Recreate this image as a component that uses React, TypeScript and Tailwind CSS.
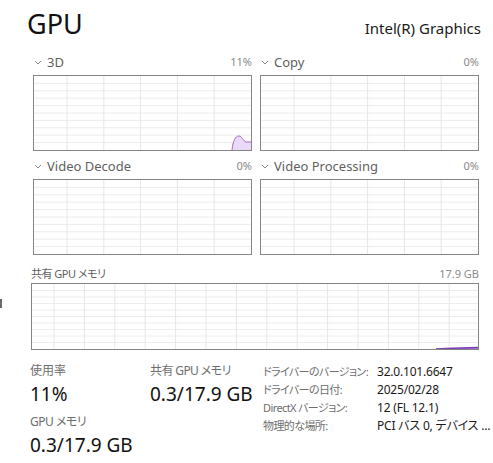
import React from 'react';

const font = { fontFamily: '"Noto Sans", "Noto Sans CJK JP", sans-serif' };

interface GridProps {
  w: number;
  h: number;
  x0: number;
  dx: number;
  cols: number;
  children?: React.ReactNode;
}

// Chart backdrop: light grid drawn in chart-local pixels
function Grid({ w, h, x0, dx, cols, children }: GridProps) {
  const rows = Array.from({ length: 9 }, (_, i) => ((i + 1) * h) / 10);
  const vlines = Array.from({ length: cols }, (_, i) => x0 + i * dx);
  return (
    <svg
      className="block h-full w-full"
      viewBox={`0 0 ${w} ${h}`}
      preserveAspectRatio="none"
    >
      {rows.map((y) => (
        <line key={`h${y}`} x1={0} x2={w} y1={y} y2={y} stroke="#ececec" strokeWidth={1} />
      ))}
      {vlines.map((x) => (
        <line key={`v${x}`} x1={x} x2={x} y1={0} y2={h} stroke="#e6e6e6" strokeWidth={1} />
      ))}
      {children}
    </svg>
  );
}

function Chevron() {
  return (
    <svg width="8" height="5" viewBox="0 0 8 5" className="mr-[5px] ml-[1px] shrink-0">
      <polyline points="1,1 4,4 7,1" fill="none" stroke="#8a8a8a" strokeWidth="1" />
    </svg>
  );
}

function SmallChart({
  title,
  value,
  children,
}: {
  title: string;
  value: string;
  children?: React.ReactNode;
}) {
  return (
    <div className="flex flex-col">
      <div className="flex h-[25px] items-center justify-between">
        <div className="flex items-center">
          <Chevron />
          <span className="text-[13px] text-[#5f5f5f]">{title}</span>
        </div>
        <span className="text-[11px] text-[#8a8a8a]">{value}</span>
      </div>
      <div className="h-[76px] border border-[#858585] bg-white">
        <Grid w={217} h={74} x0={33} dx={36.8} cols={5}>
          {children}
        </Grid>
      </div>
    </div>
  );
}

function Detail({ label, value }: { label: string; value: string }) {
  return (
    <div className="flex h-[18px] items-center whitespace-nowrap">
      <span className="w-[114px] shrink-0 text-[11px] tracking-[-0.6px] text-[#6e6e6e]">{label}</span>
      <span className="text-[12px] tracking-[-0.2px] text-[#1a1a1a]">{value}</span>
    </div>
  );
}

export default function App() {
  return (
    <div
      className="relative h-[463px] w-[493px] overflow-hidden bg-white [font-feature-settings:'palt']"
      style={font}
    >
      {/* Cut-off edge of the sidebar */}
      <div className="absolute left-0 top-[299px] h-[9px] w-[2px] bg-[#6a6a6a]" />

      {/* Header */}
      <div className="flex h-[50px] items-baseline justify-between pl-[27px] pr-[12px] pt-[6px]">
        <span className="text-[27px] leading-[36px] text-[#111]">GPU</span>
        <span className="text-[15px] text-[#1a1a1a]">Intel(R) Graphics</span>
      </div>

      {/* Engine charts */}
      <div className="ml-[33px] mr-[14px] grid grid-cols-2 gap-x-[8px] gap-y-[3px]">
        <SmallChart title="3D" value="11%">
          <path
            d="M198,74 C199,65 201,60 205,60 C208,60 209,65 212,66 L217,66 L217,74 Z"
            fill="#ead9f8"
          />
          <path
            d="M198,74 C199,65 201,60 205,60 C208,60 209,65 212,66 L217,66"
            fill="none"
            stroke="#a969d8"
            strokeWidth={1}
          />
        </SmallChart>
        <SmallChart title="Copy" value="0%" />
        <SmallChart title="Video Decode" value="0%" />
        <SmallChart title="Video Processing" value="0%" />
      </div>

      {/* Shared memory chart */}
      <div className="ml-[31px] mr-[14px] mt-[10px]">
        <div className="flex h-[18px] items-center justify-between text-[11px]">
          <span className="tracking-[-0.5px] text-[#5f5f5f]">共有 GPU メモリ</span>
          <span className="text-[#8a8a8a]">17.9 GB</span>
        </div>
        <div className="h-[67px] border border-[#858585] bg-white">
          <Grid w={446} h={65} x0={22} dx={30.4} cols={14}>
            <path d="M404,65 L420,64.2 L446,63.6 L446,65 Z" fill="#c9a8e8" />
            <path d="M404,65 L420,64.2 L446,63.6" fill="none" stroke="#7a3cb8" strokeWidth={1.6} />
          </Grid>
        </div>
      </div>

      {/* Stats */}
      <div className="mt-[12px] flex pl-[30px]">
        <div className="w-[120px]">
          <div className="h-[18px] text-[12px] leading-[18px] text-[#6e6e6e]">使用率</div>
          <div className="mt-[1px] h-[26px] text-[19px] leading-[26px] text-[#111]">11%</div>
          <div className="mt-[6px] h-[18px] text-[12px] leading-[18px] tracking-[-0.5px] text-[#6e6e6e]">
            GPU メモリ
          </div>
          <div className="mt-[1px] h-[26px] text-[19px] leading-[26px] text-[#111]">0.3/17.9 GB</div>
        </div>
        <div className="w-[113px]">
          <div className="h-[18px] text-[12px] leading-[18px] tracking-[-0.6px] text-[#6e6e6e]">
            共有 GPU メモリ
          </div>
          <div className="mt-[1px] h-[26px] whitespace-nowrap text-[19px] leading-[26px] text-[#111]">
            0.3/17.9 GB
          </div>
        </div>
        <div className="mt-[1px]">
          <Detail label="ドライバーのバージョン:" value="32.0.101.6647" />
          <Detail label="ドライバーの日付:" value="2025/02/28" />
          <Detail label="DirectX バージョン:" value="12 (FL 12.1)" />
          <Detail label="物理的な場所:" value="PCI バス 0, デバイス ..." />
        </div>
      </div>
    </div>
  );
}
